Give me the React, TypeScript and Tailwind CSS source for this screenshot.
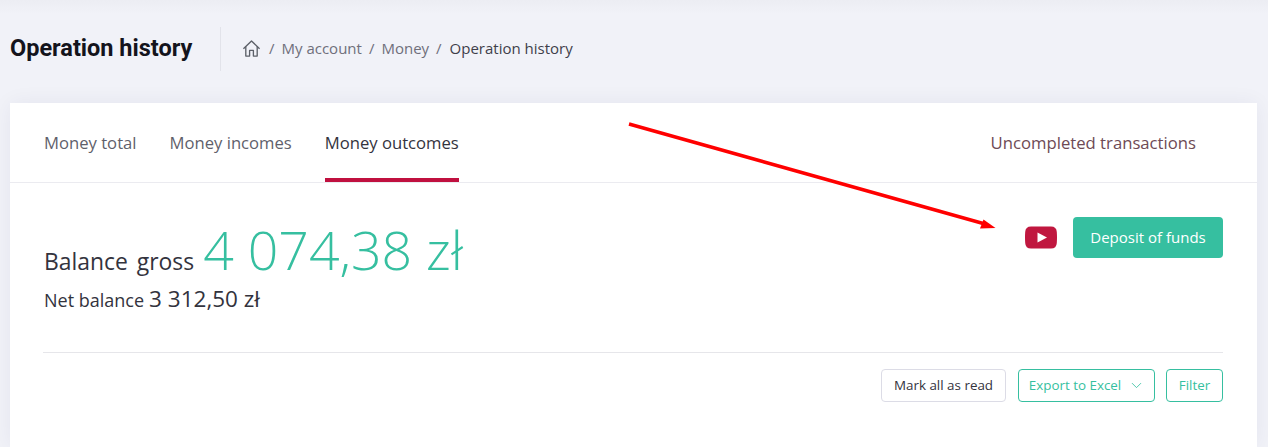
import React from 'react';
import { ChevronDown } from 'lucide-react';

const sans = "font-['Open_Sans',sans-serif]";

function Crumb({ children, current }: { children: React.ReactNode; current?: boolean }) {
  return <span className={current ? 'text-[#3f3f4a]' : 'text-[#6f6f7b]'}>{children}</span>;
}

function Tab({ label, active }: { label: string; active?: boolean }) {
  return (
    <div
      className={`flex h-full items-center border-b-[4px] pt-[5px] text-[16.65px] ${
        active ? 'border-[#c0103f] text-[#33333d]' : 'border-transparent text-[#5f5f6b]'
      }`}
    >
      {label}
    </div>
  );
}

export default function App() {
  return (
    <div className={`${sans} relative h-[447px] w-[1268px] overflow-hidden bg-[#f1f2f8]`}>
      <header className="flex h-[103px] items-center bg-[linear-gradient(to_bottom,#ecedf3,#f1f2f8_14px)] pb-[6px] pl-[10px]">
        <h1 className="w-[210px] font-['Roboto',sans-serif] text-[23.5px] font-bold text-[#14141c]">Operation history</h1>
        <div className="flex h-[44px] items-center gap-[6px] border-l border-[#e2e3ea] pl-[21px] text-[15px] text-[#6f6f7b]">
          <svg viewBox="0 0 20 20" className="mr-[1px] h-[19px] w-[19px]" fill="none" stroke="#5c6068" strokeWidth="1.4" strokeLinejoin="round">
            <path d="M1.5 10.2 L10 2 L18.5 10.2" />
            <path d="M4 8 V18 H8 V12 H12 V18 H16 V8" />
          </svg>
          <span className="px-[1px]">/</span>
          <Crumb>My account</Crumb>
          <span className="px-[1px]">/</span>
          <Crumb>Money</Crumb>
          <span className="px-[1px]">/</span>
          <span className="ml-[1px]">
            <Crumb current>Operation history</Crumb>
          </span>
        </div>
      </header>

      <main className="ml-[10px] h-[344px] w-[1247px] bg-white shadow-[0_0_20px_rgba(40,40,80,0.06)]">
        <nav className="flex h-[80px] items-center gap-[33px] border-b border-[#ebebf0] pl-[34px] pr-[61px]">
          <Tab label="Money total" />
          <Tab label="Money incomes" />
          <Tab label="Money outcomes" active />
          <div className="ml-auto pt-[1px] text-[16.7px] text-[#6e4a55]">Uncompleted transactions</div>
        </nav>

        <section className="ml-[33px] mr-[34px] flex h-[170px] items-start justify-between border-b border-[#e6e6ea] pt-[36px]">
          <div className="pl-[1px] text-[#33333d]">
            <div className="flex h-[62px] items-baseline">
              <span className="text-[22.9px] [word-spacing:3px]">Balance gross</span>
              <span className="ml-[9px] text-[53.6px] font-light leading-[62px] text-[#36bfa0]">4 074,38 zł</span>
            </div>
            <div className="mt-[1px] flex items-baseline">
              <span className="text-[18px]">Net balance</span>
              <span className="ml-[5px] text-[22.5px]">3 312,50 zł</span>
            </div>
          </div>
          <div className="-mt-[2px] flex items-center gap-[16px]">
            <svg viewBox="0 0 32 23" className="h-[23px] w-[32px]">
              <path
                d="M6 0.5 H26 Q31.5 0.5 31.8 6 Q32.2 11.5 31.8 17 Q31.5 22.5 26 22.5 H6 Q0.5 22.5 0.2 17 Q-0.2 11.5 0.2 6 Q0.5 0.5 6 0.5 Z"
                fill="#c0173f"
              />
              <path d="M12.5 6.5 L22 11.5 L12.5 16.5 Z" fill="#fff" />
            </svg>
            <button className="h-[41px] w-[150px] rounded-[4px] bg-[#36bfa0] text-[15px] text-white">Deposit of funds</button>
          </div>
        </section>

        <div className="ml-[33px] mr-[34px] mt-[16px] flex justify-end gap-[11px] text-[13.4px]">
          <button className="mr-[1px] h-[33px] w-[125px] rounded-[4px] border border-[#dcdce6] text-[#33333d]">Mark all as read</button>
          <button className="flex h-[33px] w-[137px] items-center justify-center gap-[7px] rounded-[4px] border border-[#36bfa0] pl-[1px] text-[#36bfa0]">
            Export to Excel
            <ChevronDown className="h-[17px] w-[17px]" strokeWidth={1.2} />
          </button>
          <button className="h-[33px] w-[57px] rounded-[4px] border border-[#36bfa0] text-[#36bfa0]">Filter</button>
        </div>
      </main>

      <svg className="absolute left-0 top-0 h-[447px] w-[1268px]" viewBox="0 0 1268 447">
        <line x1="629" y1="124" x2="985" y2="224" stroke="#ff0000" strokeWidth="3.5" />
        <path d="M995.5 228 L980 228.5 L983.5 219.5 Z" fill="#ff0000" />
      </svg>
    </div>
  );
}
